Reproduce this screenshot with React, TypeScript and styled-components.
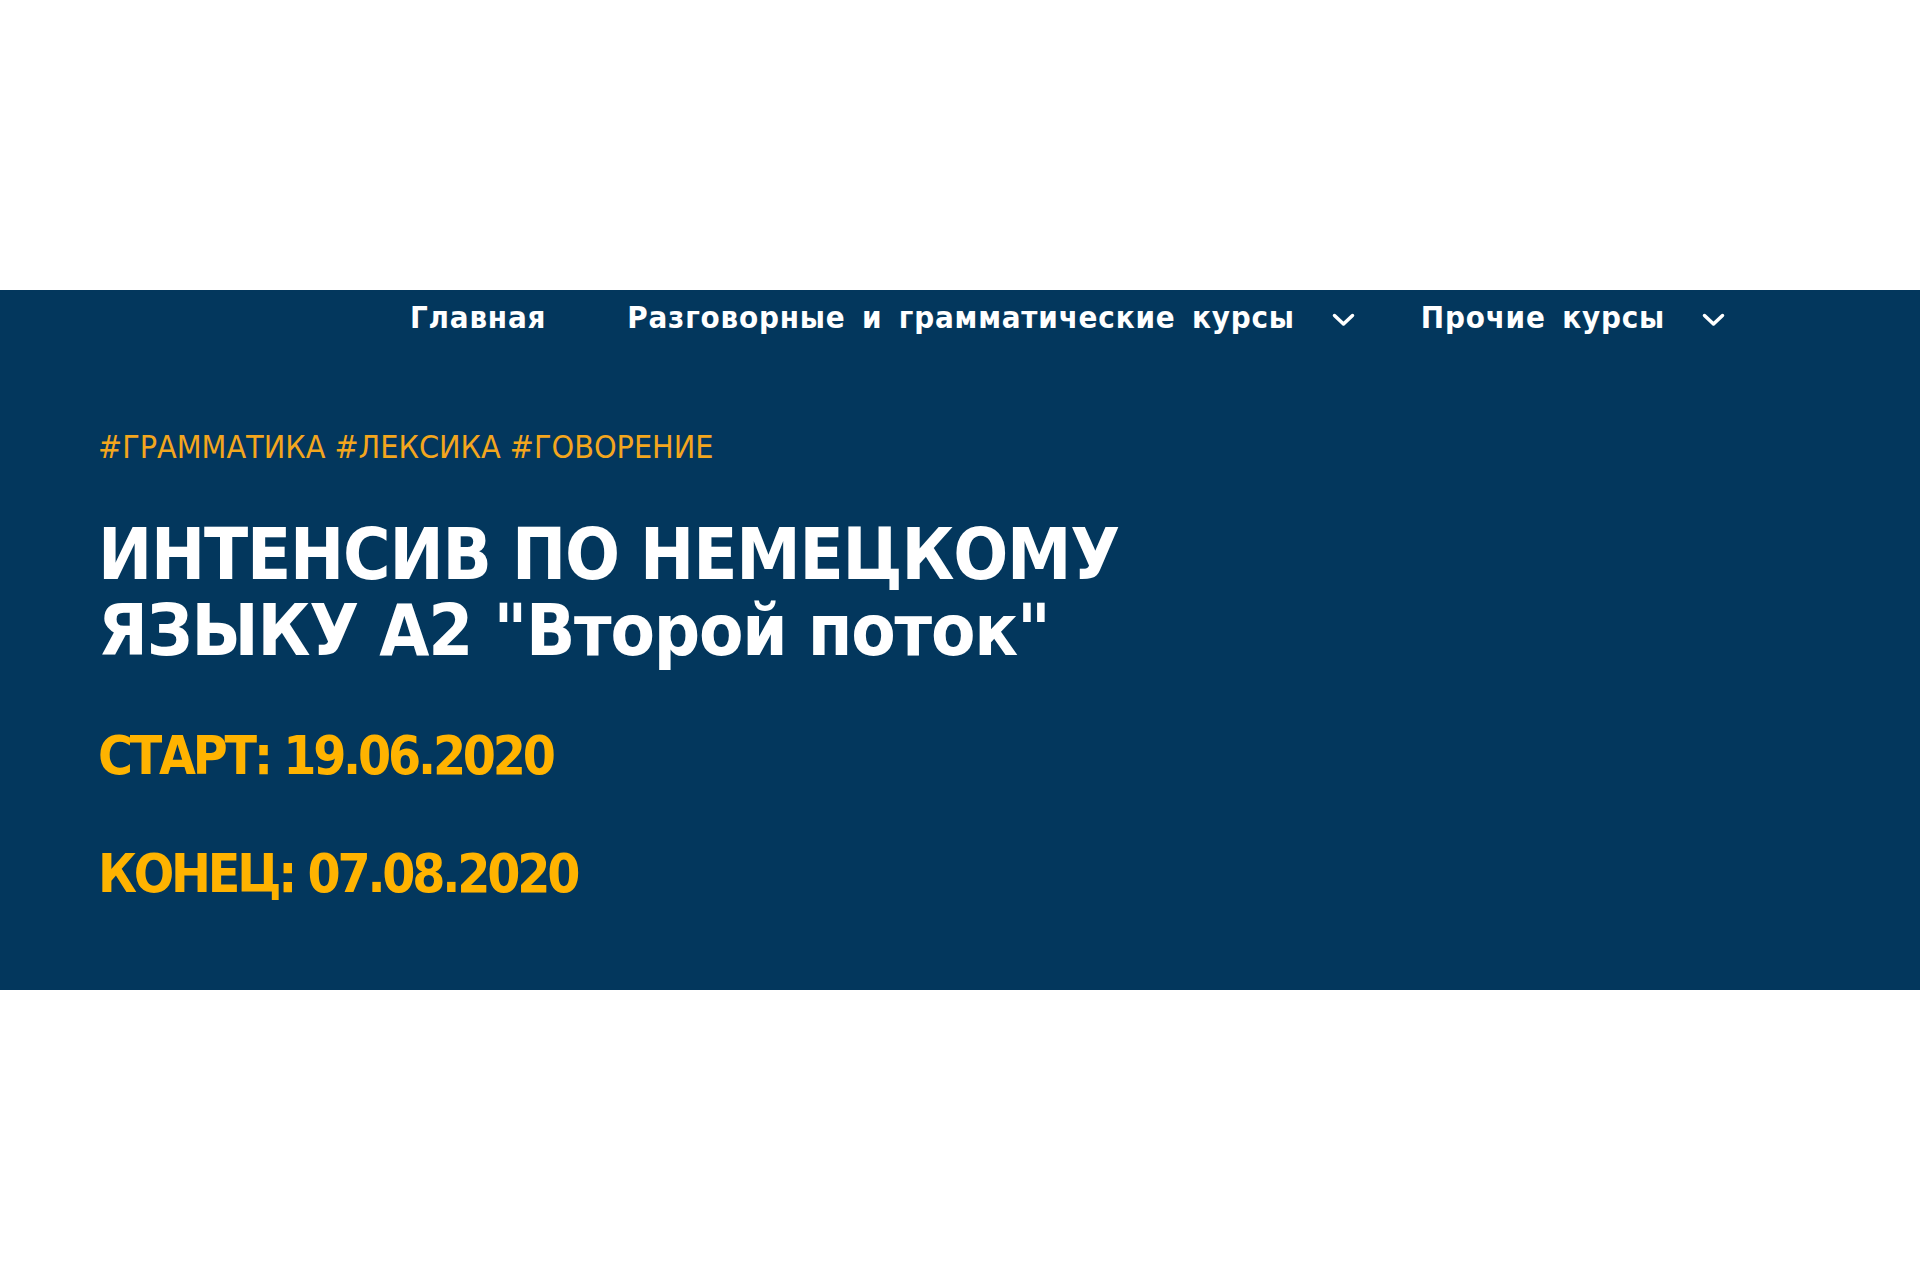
import React from "react";
import styled, { createGlobalStyle } from "styled-components";

const GlobalStyle = createGlobalStyle`
  html, body {
    margin: 0;
    padding: 0;
    background: #ffffff;
  }
  body {
    font-family: "DejaVu Sans Condensed", "DejaVu Sans", sans-serif;
    font-stretch: condensed;
  }
`;

const Page = styled.div`
  padding-top: 290px;
  min-height: 1280px;
  box-sizing: border-box;
`;

const Banner = styled.section`
  background: #03375d;
  height: 700px;
  box-sizing: border-box;
  padding-top: 7px;
`;

const Nav = styled.nav`
  display: flex;
  align-items: center;
  padding-left: 410px;
`;

const NavItem = styled.a<{ $gapAfter: number }>`
  display: flex;
  align-items: center;
  gap: 37px;
  margin-right: ${(p) => p.$gapAfter}px;
  color: #ffffff;
  font-size: 31px;
  line-height: 40px;
  letter-spacing: 0.8px;
  word-spacing: 6px;
  font-weight: 700;
  text-decoration: none;
  white-space: nowrap;
`;

const Chevron = styled.svg`
  width: 23px;
  height: 14px;
  margin-top: 6px;
`;

const Hero = styled.div`
  padding-left: 98px;
  margin-top: 90px;
`;

const Tags = styled.div`
  color: #f3a61d;
  font-size: 32px;
  line-height: 40px;
  font-weight: 400;
`;

const Title = styled.h1`
  margin: 49px 0 0;
  color: #ffffff;
  font-size: 72px;
  line-height: 76px;
  letter-spacing: -1.2px;
  font-weight: 700;
`;

const DateLine = styled.p`
  margin: 58px 0 0;
  color: #ffb300;
  font-size: 53px;
  line-height: 60px;
  letter-spacing: -3.2px;
  font-weight: 700;
`;

const Caret = () => (
  <Chevron viewBox="0 0 23 14" fill="none">
    <polyline
      points="2.5,2.5 11.5,11 20.5,2.5"
      stroke="#ffffff"
      strokeWidth="3.5"
      strokeLinecap="round"
      strokeLinejoin="round"
    />
  </Chevron>
);

export default function App() {
  return (
    <Page>
      <GlobalStyle />
      <Banner>
        <Nav>
          <NavItem href="#" $gapAfter={81}>
            Главная
          </NavItem>
          <NavItem href="#" $gapAfter={66}>
            Разговорные и грамматические курсы
            <Caret />
          </NavItem>
          <NavItem href="#" $gapAfter={0}>
            Прочие курсы
            <Caret />
          </NavItem>
        </Nav>
        <Hero>
          <Tags>#ГРАММАТИКА #ЛЕКСИКА #ГОВОРЕНИЕ</Tags>
          <Title>
            ИНТЕНСИВ ПО НЕМЕЦКОМУ
            <br />
            ЯЗЫКУ А2 "Второй поток"
          </Title>
          <DateLine>СТАРТ: 19.06.2020</DateLine>
          <DateLine>КОНЕЦ: 07.08.2020</DateLine>
        </Hero>
      </Banner>
    </Page>
  );
}
